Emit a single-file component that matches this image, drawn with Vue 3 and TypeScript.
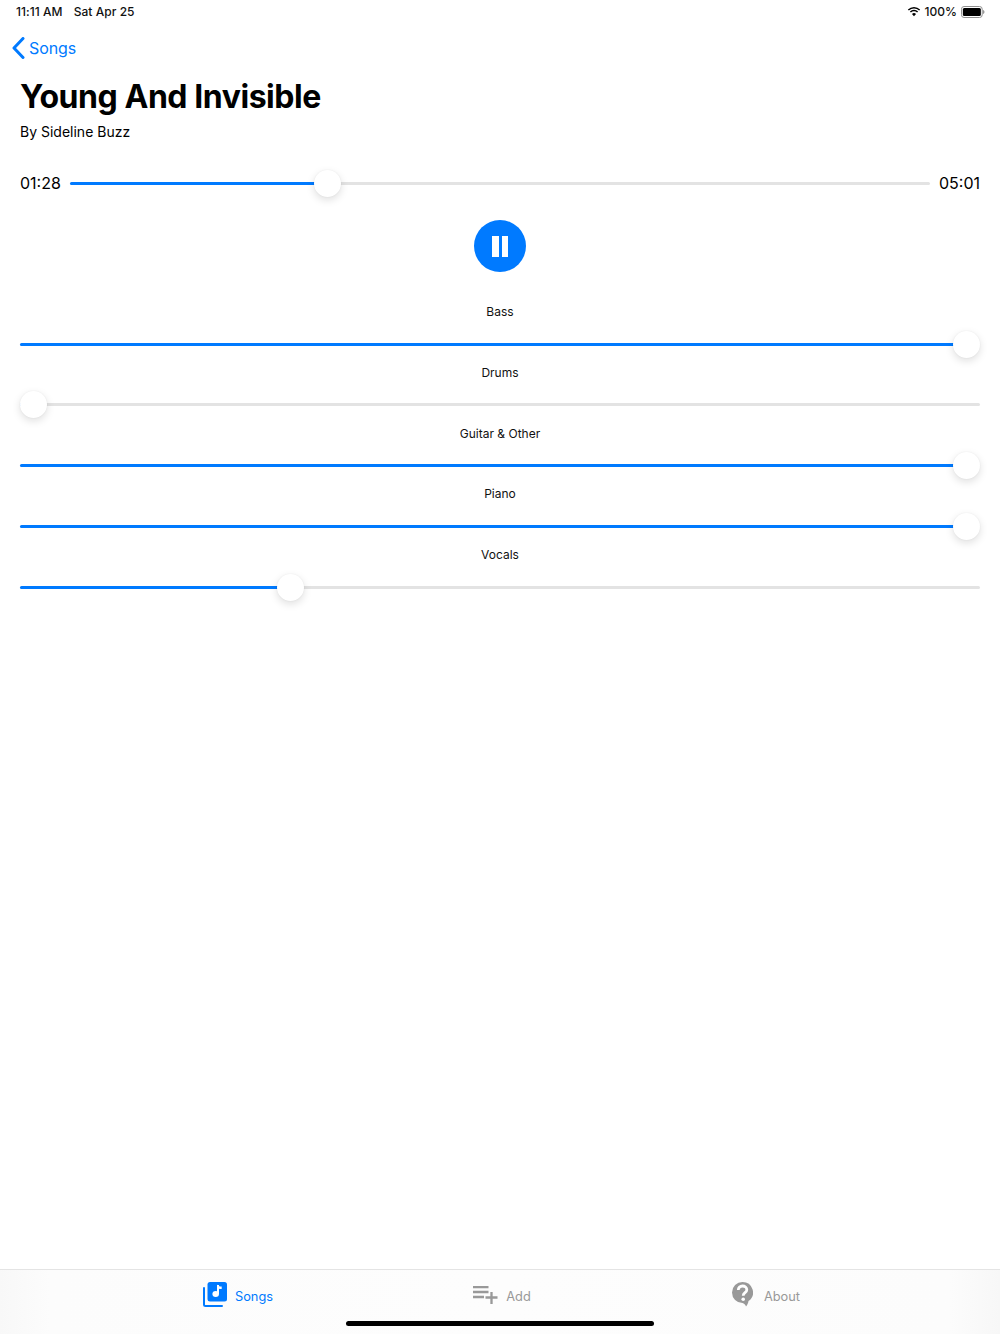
<script setup lang="ts">
interface Track { name: string; value: number }
const tracks: Track[] = [
  { name: 'Bass', value: 100 },
  { name: 'Drums', value: 0 },
  { name: 'Guitar & Other', value: 100 },
  { name: 'Piano', value: 100 },
  { name: 'Vocals', value: 27.5 },
]
const thumbStyle = (v: number) => ({ left: `calc((100% - 27px) * ${v / 100})` })
const fillStyle = (v: number) => ({ width: `calc((100% - 27px) * ${v / 100} + 13px)` })
</script>

<template>
  <div class="page">
    <header class="status">
      <div class="status-left"><span>11:11 AM</span><span>Sat Apr 25</span></div>
      <div class="status-right">
        <svg class="wifi" width="14" height="11" viewBox="0 0 15 11">
          <path d="M7.5 2.3c2.1 0 4 .8 5.5 2.2l1.1-1.2A9.7 9.7 0 0 0 7.500 .6 9.700 9.700 0 0 0 .9 3.300L2 4.500a8 8 0 0 1 5.500-2.200z" fill="#000"/>
          <path d="M7.500 5.300c1.300 0 2.400.5 3.300 1.300l1.100-1.200a6.500 6.500 0 0 0-8.800 0l1.100 1.200c.9-.8 2-1.300 3.300-1.300z" fill="#000"/>
          <path d="M7.500 10.500 9.700 8.100a3.200 3.200 0 0 0-4.400 0z" fill="#000"/>
        </svg>
        <span>100%</span>
        <svg class="battery" width="24" height="12" viewBox="0 0 26 12" preserveAspectRatio="none">
          <rect x=".5" y=".5" width="22.500" height="11" rx="2.800" fill="none" stroke="#8a8a8a"/>
          <rect x="2" y="2" width="19.500" height="8" rx="1.500" fill="#000"/>
          <path d="M24 4v4c.8-.3 1.400-1 1.400-2S24.800 4.300 24 4z" fill="#8a8a8a"/>
        </svg>
      </div>
    </header>

    <nav class="nav">
      <svg width="13" height="22" viewBox="0 0 13 22">
        <path d="M11 1.500 2 11l9 9.500" fill="none" stroke="#007aff" stroke-width="3" stroke-linecap="round" stroke-linejoin="round"/>
      </svg>
      <span>Songs</span>
    </nav>

    <main class="content">
      <h1>Young And Invisible</h1>
      <p class="artist">By Sideline Buzz</p>

      <div class="progress">
        <span class="time">01:28</span>
        <div class="slider">
          <div class="rail"></div>
          <div class="fill" :style="fillStyle(29.35)"></div>
          <div class="thumb" :style="thumbStyle(29.35)"></div>
        </div>
        <span class="time end">05:01</span>
      </div>

      <div class="play-row">
        <button class="pause" type="button" aria-label="Pause">
          <span></span><span></span>
        </button>
      </div>

      <section class="tracks">
        <div v-for="t in tracks" :key="t.name" class="track">
          <div class="track-name">{{ t.name }}</div>
          <div class="slider">
            <div class="rail"></div>
            <div class="fill" :style="fillStyle(t.value)"></div>
            <div class="thumb" :style="thumbStyle(t.value)"></div>
          </div>
        </div>
      </section>
    </main>

    <footer class="tabbar">
      <div class="tabs">
        <div class="tab active">
          <svg width="24" height="25" viewBox="0 0 24 25">
            <path d="M1 6v16.500A1.500 1.500 0 0 0 2.500 24H19" fill="none" stroke="#007aff" stroke-width="2" stroke-linecap="round"/>
            <rect x="4.500" y="0" width="19.500" height="19.500" rx="2.500" fill="#007aff"/>
            <path d="M15 3v9" stroke="#fff" stroke-width="2" fill="none"/>
            <ellipse cx="12.700" cy="12" rx="3.300" ry="2.900" fill="#fff"/>
            <path d="M14 2.500c.5 1.500 2.500 2 4.700 2.100V7c-2 0-3.800-.4-4.700-1.300z" fill="#fff"/>
          </svg>
          <span>Songs</span>
        </div>
        <div class="tab">
          <svg width="25" height="18" viewBox="0 0 25 18">
            <path d="M0 1h15.500M0 6h15.500M0 11h11M18.500 6v12M12.500 11.500h12" stroke="#999" stroke-width="2.300" fill="none"/>
          </svg>
          <span>Add</span>
        </div>
        <div class="tab about">
          <svg width="21" height="25" viewBox="0 0 21 25">
            <path d="M10.500 0A10.500 10.500 0 0 1 16.500 19.100C16.200 21 15.500 23 14 24.500 13.500 23 12 21.300 10.500 21A10.500 10.500 0 0 1 10.500 0z" fill="#999"/>
            <path d="M6.300 8c0-2.300 1.800-4 4.200-4s4.300 1.500 4.300 3.700c0 3-3.600 3-3.600 6" fill="none" stroke="#fff" stroke-width="2.800"/>
            <circle cx="11.200" cy="17.300" r="1.800" fill="#fff"/>
          </svg>
          <span>About</span>
        </div>
      </div>
      <div class="home"></div>
    </footer>
  </div>
</template>

<style scoped>
.page {
  width: 1000px;
  height: 1334px;
  display: flex;
  flex-direction: column;
  background: #fff;
  color: #000;
  font-family: Inter, "Liberation Sans", sans-serif;
  overflow: hidden;
}
.status {
  height: 23px;
  padding: 0 15px 0 16px;
  display: flex;
  justify-content: space-between;
  align-items: center;
  font-size: 12px;
  font-weight: 500;
  color: #111;
}
.status-left { display: flex; gap: 11px; letter-spacing: 0.05px; }
.status-right { display: flex; align-items: center; gap: 5px; }
.status-right .wifi { margin-right: -1px; }
.status-right .battery { margin-left: -1px; }
.nav {
  height: 49px;
  padding-left: 12px;
  display: flex;
  align-items: center;
  gap: 4px;
  color: #007aff;
  font-size: 16px;
  letter-spacing: -0.1px;
}
.content {
  flex: 1;
  padding: 0 20px;
}
h1 {
  margin: 1px 0 0;
  height: 47px;
  line-height: 48px;
  font-size: 32px;
  font-weight: 700;
  letter-spacing: -0.45px;
}
.artist {
  margin: 0;
  height: 24px;
  line-height: 24px;
  font-size: 14px;
}
.progress {
  margin-top: 24px;
  height: 30px;
  display: flex;
  align-items: center;
  gap: 9px;
}
.time {
  width: 41px;
  font-size: 16px;
  white-space: nowrap;
}
.time.end { text-align: right; }
.slider {
  position: relative;
  flex: 1;
  height: 30px;
}
.rail, .fill {
  position: absolute;
  left: 0;
  top: 13.500px;
  height: 3px;
  border-radius: 2px;
}
.rail { right: 0; background: #e3e3e3; }
.fill { background: #007aff; }
.thumb {
  position: absolute;
  top: 1.500px;
  width: 27px;
  height: 27px;
  border-radius: 50%;
  background: #fff;
  box-shadow: 0 3px 8px rgba(0, 0, 0, 0.13), 0 0 2px rgba(0, 0, 0, 0.06);
}
.play-row {
  margin-top: 22px;
  display: flex;
  justify-content: center;
}
.pause {
  width: 52px;
  height: 52px;
  padding: 0;
  border: none;
  border-radius: 50%;
  background: #007aff;
  display: flex;
  align-items: center;
  justify-content: center;
  gap: 3px;
}
.pause span {
  width: 6.500px;
  height: 21px;
  background: #fff;
}
.tracks {
  margin-top: 25px;
  display: flex;
  flex-direction: column;
}
.track {
  height: 60.800px;
  display: flex;
  flex-direction: column;
  align-items: stretch;
}
.track-name {
  flex: none;
  height: 32.200px;
  line-height: 30px;
  text-align: center;
  font-size: 12px;
  color: #111;
}
.track .slider { flex: none; height: 28.600px; }
.tabbar {
  position: relative;
  height: 64px;
  border-top: 1px solid #e4e4e4;
  background: linear-gradient(90deg, #f8f8f8 0, #fcfcfc 50px, #fdfdfd 50%, #fcfcfc 950px, #f7f7f7 100%);
}
.tabs {
  display: flex;
  justify-content: center;
  height: 52px;
  padding-left: 4px;
}
.tab {
  width: 264px;
  display: flex;
  align-items: center;
  justify-content: center;
  gap: 8px;
  font-size: 12.800px;
  color: #999;
}
.tab svg { margin-bottom: 3px; }
.tab.about { gap: 11px; }
.tab.active { color: #007aff; }
.home {
  position: absolute;
  left: 346px;
  bottom: 8px;
  width: 308px;
  height: 5px;
  border-radius: 3px;
  background: #000;
}
</style>
